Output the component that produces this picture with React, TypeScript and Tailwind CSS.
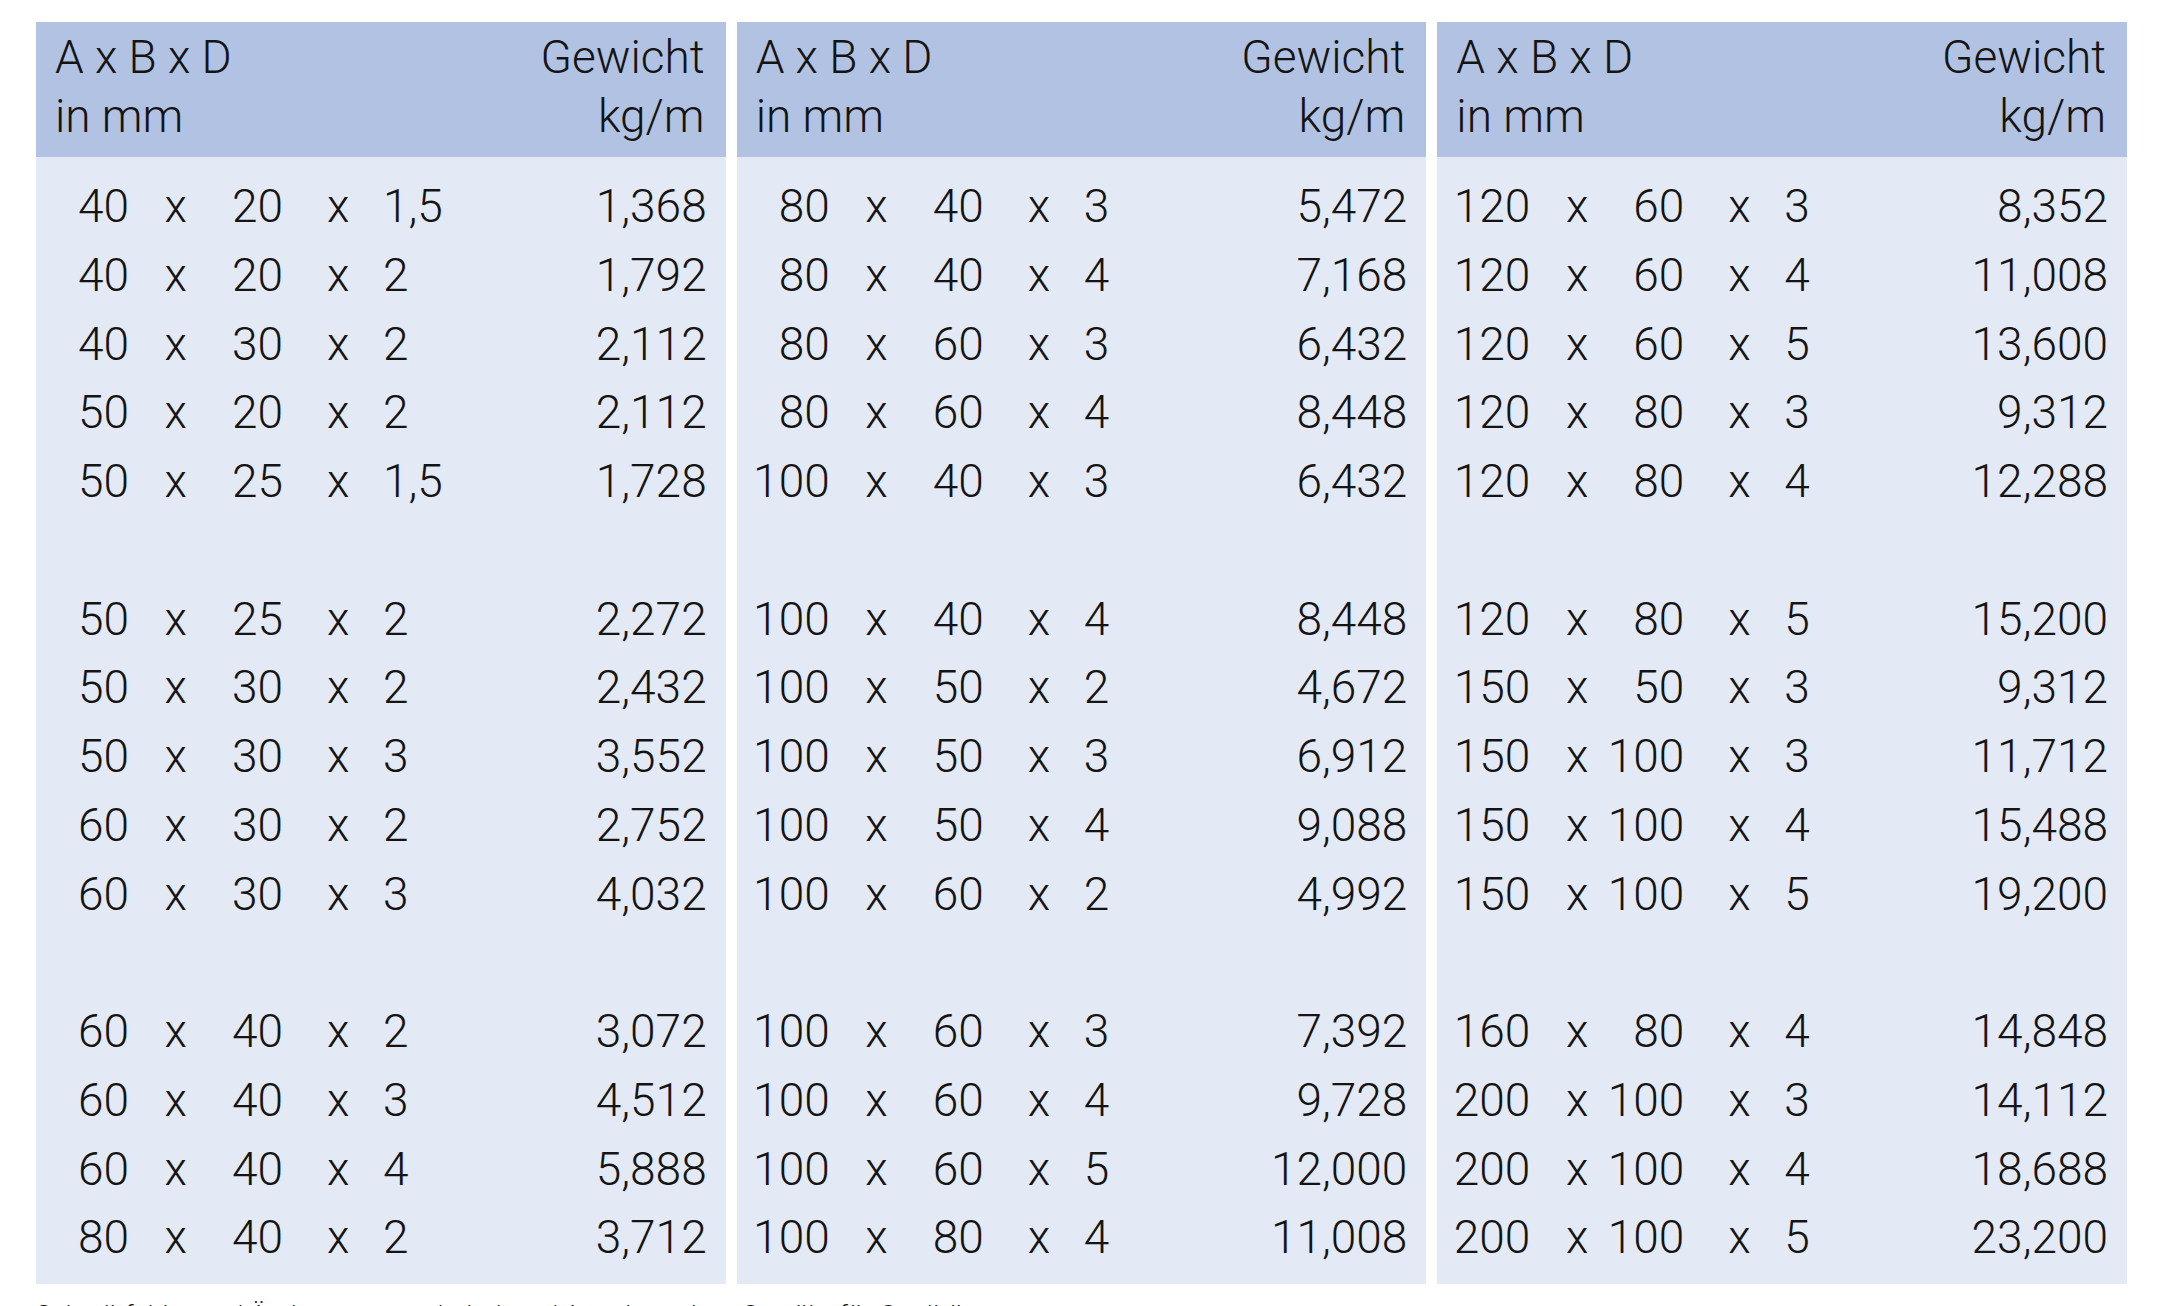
import React from 'react';

type Row = [string, string, string, string] | null;

const panels: Row[][] = [
  [
    ['40', '20', '1,5', '1,368'],
    ['40', '20', '2', '1,792'],
    ['40', '30', '2', '2,112'],
    ['50', '20', '2', '2,112'],
    ['50', '25', '1,5', '1,728'],
    null,
    ['50', '25', '2', '2,272'],
    ['50', '30', '2', '2,432'],
    ['50', '30', '3', '3,552'],
    ['60', '30', '2', '2,752'],
    ['60', '30', '3', '4,032'],
    null,
    ['60', '40', '2', '3,072'],
    ['60', '40', '3', '4,512'],
    ['60', '40', '4', '5,888'],
    ['80', '40', '2', '3,712'],
  ],
  [
    ['80', '40', '3', '5,472'],
    ['80', '40', '4', '7,168'],
    ['80', '60', '3', '6,432'],
    ['80', '60', '4', '8,448'],
    ['100', '40', '3', '6,432'],
    null,
    ['100', '40', '4', '8,448'],
    ['100', '50', '2', '4,672'],
    ['100', '50', '3', '6,912'],
    ['100', '50', '4', '9,088'],
    ['100', '60', '2', '4,992'],
    null,
    ['100', '60', '3', '7,392'],
    ['100', '60', '4', '9,728'],
    ['100', '60', '5', '12,000'],
    ['100', '80', '4', '11,008'],
  ],
  [
    ['120', '60', '3', '8,352'],
    ['120', '60', '4', '11,008'],
    ['120', '60', '5', '13,600'],
    ['120', '80', '3', '9,312'],
    ['120', '80', '4', '12,288'],
    null,
    ['120', '80', '5', '15,200'],
    ['150', '50', '3', '9,312'],
    ['150', '100', '3', '11,712'],
    ['150', '100', '4', '15,488'],
    ['150', '100', '5', '19,200'],
    null,
    ['160', '80', '4', '14,848'],
    ['200', '100', '3', '14,112'],
    ['200', '100', '4', '18,688'],
    ['200', '100', '5', '23,200'],
  ],
];

const Panel: React.FC<{ rows: Row[] }> = ({ rows }) => (
  <div className="flex flex-col">
    <div className="flex justify-between bg-[#b1c2e3] pl-[19px] pr-[21px] pt-[6px] pb-[11px] leading-[59px]">
      <div>
        <div>A x B x D</div>
        <div>in mm</div>
      </div>
      <div className="text-right">
        <div>Gewicht</div>
        <div>kg/m</div>
      </div>
    </div>
    <div className="bg-[#e3e9f5] pt-[15px] pb-[12px]">
      {rows.map((r, i) =>
        r ? (
          <div key={i} className="grid h-[68.75px] grid-cols-[93px_68px_86px_100px_1fr_auto] items-center pr-[19px]">
            <div className="flex justify-end whitespace-nowrap">{r[0]}</div>
            <div className="pr-[10px] text-right">x</div>
            <div className="flex justify-end whitespace-nowrap">{r[1]}</div>
            <div className="pl-[44px]">x</div>
            <div className="whitespace-nowrap">{r[2]}</div>
            <div className="text-right whitespace-nowrap">{r[3]}</div>
          </div>
        ) : (
          <div key={i} className="h-[68.75px]" />
        )
      )}
    </div>
  </div>
);

export default function App() {
  return (
    <div className="h-[1306px] w-[2165px] overflow-hidden bg-white font-['Roboto',sans-serif] font-light text-[#141414]">
      <div className="grid w-[2127px] grid-cols-3 gap-[11px] pl-[36px] pt-[22px] text-[46px]">
        {panels.map((rows, i) => (
          <Panel key={i} rows={rows} />
        ))}
      </div>
      <p className="pl-[36px] pt-[16px] text-[26px] leading-[30px] tracking-[0.02em]">
        Schreibfehler und Änderungen vorbehalten / Angaben ohne Gewähr für Qualität
      </p>
    </div>
  );
}
